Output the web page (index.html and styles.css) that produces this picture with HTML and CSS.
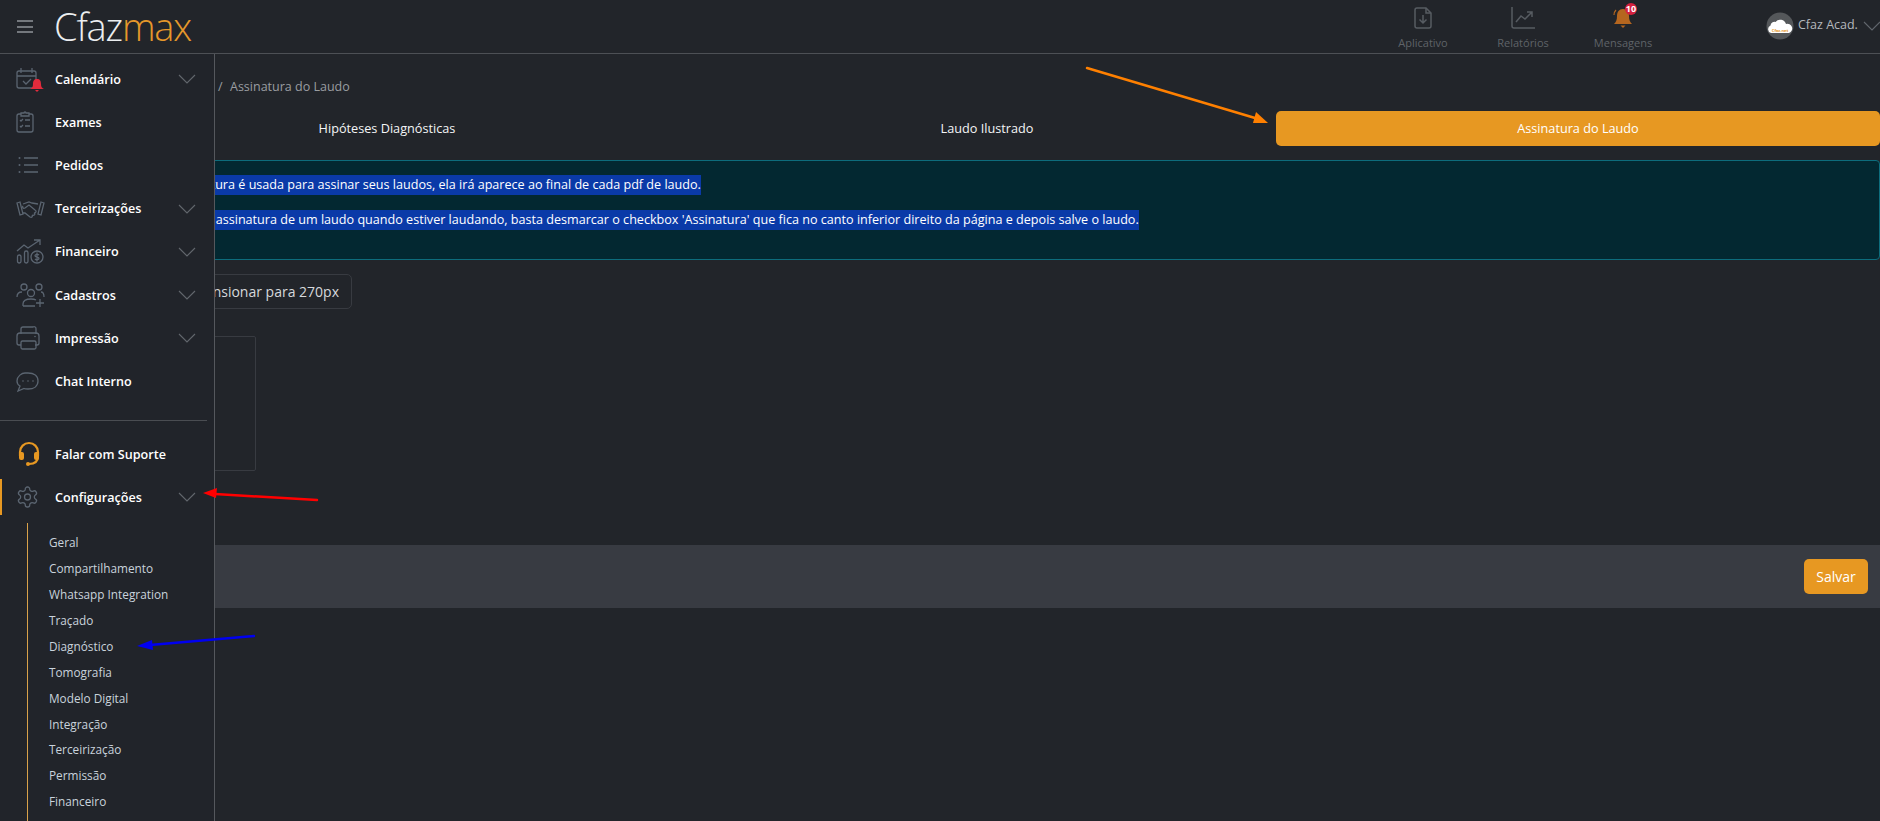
FILE: index.html
```html
<!DOCTYPE html>
<html lang="pt-BR">
<head>
<meta charset="utf-8">
<title>Assinatura do Laudo</title>
<link rel="stylesheet" href="styles.css">
</head>
<body>
<header class="topbar">
  <button class="burger" aria-label="Menu"><span></span><span></span><span></span></button>
  <div class="logo">Cfaz<span class="logo-max">max</span></div>
  <div class="actions">
    <a class="action">
      <svg class="action-icon" viewBox="0 0 24 24"><path d="M6 2h9l5 5v13a2 2 0 0 1-2 2H6a2 2 0 0 1-2-2V4a2 2 0 0 1 2-2z"/><path d="M15 2v5h5"/><path d="M12 9v8M8.500 13.500 12 17l3.500-3.500"/></svg>
      <span>Aplicativo</span>
    </a>
    <a class="action">
      <svg class="action-icon" viewBox="0 0 24 24"><path d="M1 1v19a2 2 0 0 0 2 2h21"/><path d="M5 16l5-6 4 3 7-7M16 6h5v5"/></svg>
      <span>Relatórios</span>
    </a>
    <a class="action">
      <span class="bell-wrap">
        <svg class="action-icon bell" viewBox="0 0 24 24"><path d="M12 3c4 0 6 3 6 7 0 4 1 6 3 8H3c2-2 3-4 3-8 0-4 2-7 6-7z"/><path d="M9.500 19.500h5L12 22z"/><path class="bell-arc" d="M3 9c0-2 1-4 2-5"/></svg>
        <b class="badge">10</b>
      </span>
      <span>Mensagens</span>
    </a>
  </div>
  <div class="user">
    <svg class="avatar" viewBox="0 0 28 28"><circle cx="14" cy="14" r="13.500" fill="#54575a"/><path fill="#fff" d="M5 21a4 4 0 0 1-.5-7.500 4 4 0 0 1 5-3.500 6 6 0 0 1 10.500 2 4.500 4.500 0 0 1 3 9z"/><text x="14" y="19.500" class="avatar-text">Cfaz.net</text></svg>
    <span class="user-name">Cfaz Acad.</span>
    <svg class="chev chev-user" viewBox="0 0 18 10"><path d="M1 1l8 8 8-8"/></svg>
  </div>
</header>

<div class="shell">
  <main class="main">
    <nav class="crumbs"><span class="crumb-hidden">Diagnóstico</span><span class="crumb-sep">/</span><span>Assinatura do Laudo</span></nav>
    <div class="tabs">
      <a class="tab">Hipóteses Diagnósticas</a>
      <a class="tab">Laudo Ilustrado</a>
      <a class="tab tab-active">Assinatura do Laudo</a>
    </div>
    <section class="alert">
      <p class="alert-line alert-line-first"><span class="marked">Esta assinatura é usada para assinar seus laudos, ela irá aparece ao final de cada pdf de laudo.</span></p>
      <p class="alert-line"><span class="marked">Para retirar a assinatura de um laudo quando estiver laudando, basta desmarcar o checkbox 'Assinatura' que fica no canto inferior direito da página e depois salve o laudo.</span></p>
    </section>
    <button class="resize">Redimensionar para 270px</button>
    <div class="sign-box"></div>
    <footer class="savebar"><button class="save">Salvar</button></footer>
  </main>

  <aside class="sidebar">
    <ul class="menu">
      <li class="item">
        <svg class="ico" viewBox="0 0 32 28"><rect x="3" y="6" width="19" height="17" rx="2"/><path d="M3 11h19M7 3v5M18 3v5M9 16l3 3 5-5"/><path class="red" d="M23 14c3 0 4 2 4 5 0 3 1 4 3 5H16c2-1 3-2 3-5 0-3 1-5 4-5zM21 25h4l-2 2z"/></svg>
        <span>Calendário</span>
        <svg class="chev" viewBox="0 0 18 10"><path d="M1 1l8 8 8-8"/></svg>
      </li>
      <li class="item">
        <svg class="ico" viewBox="0 0 32 28"><path d="M7 6H5a2 2 0 0 0-2 2v14a2 2 0 0 0 2 2h12a2 2 0 0 0 2-2V8a2 2 0 0 0-2-2h-2"/><path d="M7 8V5h3a1 1 0 0 1 2 0h3v3z"/><path d="M6 12l1 1 2-2M11 12h5M6 18l1 1 2-2M11 18h5"/></svg>
        <span>Exames</span>
      </li>
      <li class="item">
        <svg class="ico" viewBox="0 0 32 28"><path d="M10 6h14M10 13h14M10 20h14"/><circle class="dot" cx="5.500" cy="6" r="1"/><circle class="dot" cx="5.500" cy="13" r="1"/><circle class="dot" cx="5.500" cy="20" r="1"/></svg>
        <span>Pedidos</span>
      </li>
      <li class="item">
        <svg class="ico" viewBox="0 0 32 28"><path d="M3 8l3-1 3 12-3 1zM30 8l-3-1-3 12 3 1z"/><path d="M9 9l6-2 3 1 6 1M9 18l2 0 5 4c2 1 3-1 2-2 2 1 4-1 2-2 2 0 3-2 1-3l-6-5-4 3c-2 1-3-1-2-2"/></svg>
        <span>Terceirizações</span>
        <svg class="chev" viewBox="0 0 18 10"><path d="M1 1l8 8 8-8"/></svg>
      </li>
      <li class="item">
        <svg class="ico" viewBox="0 0 32 28"><rect x="3.500" y="17" width="3.500" height="8" rx="1.700"/><rect x="10.500" y="13" width="3.500" height="12" rx="1.700"/><path d="M3 13l7-6 4 3 12-8M20 2h6v5"/><circle cx="23" cy="19" r="6"/><path d="M25 17c-1-1-4-1-4 .8s4 .8 4 2.500-3 1.800-4 .7M23 14.500v9"/></svg>
        <span>Financeiro</span>
        <svg class="chev" viewBox="0 0 18 10"><path d="M1 1l8 8 8-8"/></svg>
      </li>
      <li class="item">
        <svg class="ico" viewBox="0 0 32 28"><circle cx="10" cy="6" r="3"/><circle cx="25" cy="6" r="3"/><circle cx="17" cy="12" r="3.500"/><path d="M3 16c0-3 2-5 5-5M30 16c0-3-1-5-3-5M9 25v-2c0-3 3-5 8-5 2 0 4 .4 5 1M9 25h12"/><path d="M26 18v8M22 22h8"/></svg>
        <span>Cadastros</span>
        <svg class="chev" viewBox="0 0 18 10"><path d="M1 1l8 8 8-8"/></svg>
      </li>
      <li class="item">
        <svg class="ico" viewBox="0 0 32 28"><path d="M7 10V5a2 2 0 0 1 2-2h10a2 2 0 0 1 3 2v5"/><path d="M7 21H5a2 2 0 0 1-2-2v-7a3 3 0 0 1 3-3h16a3 3 0 0 1 3 3v7a2 2 0 0 1-2 2h-2"/><rect x="7" y="17" width="15" height="8" rx="1.500"/><circle class="dot" cx="21" cy="12.500" r=".8"/></svg>
        <span>Impressão</span>
        <svg class="chev" viewBox="0 0 18 10"><path d="M1 1l8 8 8-8"/></svg>
      </li>
      <li class="item">
        <svg class="ico" viewBox="0 0 32 28"><path d="M14 5c6 0 10 3 10 8s-4 8-10 8c-2 0-3 0-4-.5L4 23l2-5c-2-1-3-3-3-5 0-5 5-8 8-8z"/><circle class="dot" cx="9" cy="13" r=".8"/><circle class="dot" cx="14" cy="13" r=".8"/><circle class="dot" cx="19" cy="13" r=".8"/></svg>
        <span>Chat Interno</span>
      </li>
    </ul>
    <hr class="divider">
    <ul class="menu">
      <li class="item">
        <svg class="ico ico-orange" viewBox="0 0 32 28"><path d="M6 16v-4a9 9 0 0 1 18 0v4c0 5-3 8-9 8"/><rect class="fill" x="5" y="12" width="5" height="8" rx="2"/><rect class="fill" x="20" y="12" width="5" height="8" rx="2"/><circle class="fill" cx="14" cy="24" r="2"/></svg>
        <span>Falar com Suporte</span>
      </li>
      <li class="item item-active">
        <svg class="ico" viewBox="0 0 32 28"><g transform="translate(1.500 2)"><path d="M12.220 2h-.44a2 2 0 0 0-2 2v.18a2 2 0 0 1-1 1.730l-.43.25a2 2 0 0 1-2 0l-.15-.08a2 2 0 0 0-2.730.73l-.22.38a2 2 0 0 0 .73 2.730l.15.1a2 2 0 0 1 1 1.720v.51a2 2 0 0 1-1 1.740l-.15.09a2 2 0 0 0-.73 2.730l.22.38a2 2 0 0 0 2.730.73l.15-.08a2 2 0 0 1 2 0l.43.25a2 2 0 0 1 1 1.730V20a2 2 0 0 0 2 2h.44a2 2 0 0 0 2-2v-.18a2 2 0 0 1 1-1.730l.43-.25a2 2 0 0 1 2 0l.15.08a2 2 0 0 0 2.730-.73l.22-.39a2 2 0 0 0-.73-2.730l-.15-.08a2 2 0 0 1-1-1.740v-.5a2 2 0 0 1 1-1.740l.15-.09a2 2 0 0 0 .73-2.730l-.22-.38a2 2 0 0 0-2.730-.73l-.15.08a2 2 0 0 1-2 0l-.43-.25a2 2 0 0 1-1-1.730V4a2 2 0 0 0-2-2z"/><circle cx="12" cy="12" r="3"/></g></svg>
        <span>Configurações</span>
        <svg class="chev" viewBox="0 0 18 10"><path d="M1 1l8 8 8-8"/></svg>
      </li>
    </ul>
    <ul class="submenu">
      <li>Geral</li>
      <li>Compartilhamento</li>
      <li>Whatsapp Integration</li>
      <li>Traçado</li>
      <li>Diagnóstico</li>
      <li>Tomografia</li>
      <li>Modelo Digital</li>
      <li>Integração</li>
      <li>Terceirização</li>
      <li>Permissão</li>
      <li>Financeiro</li>
    </ul>
  </aside>
</div>

<svg class="arrows" viewBox="0 0 1880 821" aria-hidden="true">
  <path class="arrow-line orange" d="M1087 68 1255 118"/>
  <path class="arrow-head orange-fill" d="M1268 123 1253 123 1256 112z"/>
  <path class="arrow-line red-line" d="M317 500 215 494"/>
  <path class="arrow-head red-fill" d="M203 493 217 488 216 498z"/>
  <path class="arrow-line blue" d="M254 636 150 645"/>
  <path class="arrow-head blue-fill" d="M137 646 152 640 153 650z"/>
</svg>
</body>
</html>
```

FILE: styles.css
```css
* { box-sizing: border-box; }
html, body { margin: 0; height: 821px; overflow: hidden; }
body {
  background: #22252a;
  color: #fff;
  font-family: "Open Sans", "Liberation Sans", sans-serif;
  font-size: 13px;
  display: flex;
  flex-direction: column;
  position: relative;
}
ul { list-style: none; margin: 0; padding: 0; }
p { margin: 0; }

.topbar {
  height: 54px;
  flex: none;
  display: flex;
  align-items: center;
  border-bottom: 1px solid #4d5055;
}
.burger {
  width: 16px;
  height: 13px;
  margin-left: 17px;
  padding: 0;
  border: 0;
  background: none;
  display: flex;
  flex-direction: column;
  justify-content: space-between;
}
.burger span { display: block; height: 2px; width: 16px; background: #74787d; }
.logo {
  margin-left: 21px;
  font-family: "Open Sans", sans-serif;
  font-weight: 300;
  font-size: 38px;
  letter-spacing: -1.200px;
  line-height: 52px;
  height: 53px;
  color: #eceef0;
}
.logo-max { color: #e5982a; }
.actions { margin-left: auto; display: flex; align-items: flex-start; height: 53px; margin-right: 93px; }
.action {
  width: 100px;
  display: flex;
  flex-direction: column;
  align-items: center;
  padding-top: 6px;
  font-size: 11px;
  line-height: 15px;
  color: #5f6368;
}
.action-icon {
  width: 24px;
  height: 24px;
  fill: none;
  stroke: #575c62;
  stroke-width: 1.5;
  display: block;
  margin-bottom: 5px;
}
.bell-wrap { position: relative; display: block; height: 29px; }
.bell { fill: #b5661f; stroke: none; }
.bell .bell-arc { fill: none; stroke: #b5661f; stroke-width: 1.200; }
.badge {
  position: absolute;
  top: -3px;
  left: 14px;
  width: 12px;
  height: 12px;
  border-radius: 50%;
  background: #d5213f;
  color: #fff;
  font-size: 9px;
  line-height: 12px;
  text-align: center;
  font-weight: 700;
}
.user { display: flex; align-items: center; width: 114px; height: 53px; padding-bottom: 2px; }
.avatar { width: 28px; height: 28px; flex: none; }
.avatar-text { font-size: 4px; fill: #e5982a; text-anchor: middle; font-weight: 700; font-family: "Open Sans", sans-serif; }
.user-name { margin-left: 4px; margin-top: -2px; font-size: 12.500px; color: #b4b8bc; white-space: nowrap; }
.chev { width: 18px; height: 10px; margin-left: auto; fill: none; stroke: #62676d; stroke-width: 1.100; flex: none; }
.chev-user { margin-left: 5px; }

.shell { position: relative; flex: 1; min-height: 0; }
.main { margin-left: 76px; padding-top: 23px; }
.crumbs { height: 20px; line-height: 20px; font-size: 12.500px; color: #9a9da1; padding-left: 70px; display: flex; }
.crumb-hidden { width: 72px; }
.crumb-sep { width: 12px; }
.tabs { margin-top: 14px; display: grid; grid-template-columns: 622px 578px 1fr; height: 35px; }
.tab { display: flex; align-items: center; justify-content: center; padding-bottom: 2px; border-radius: 5px; font-size: 12.700px; color: #f4f5f6; }
.tab-active { background: #e79822; color: #fff; }
.alert {
  margin-top: 14px;
  height: 100px;
  padding: 14px 0 0 58px;
  background: #032831;
  border: 1px solid #0d6c7c;
  border-radius: 4px;
}
.alert-line { line-height: 20px; height: 20px; margin-bottom: 15px; font-size: 12.600px; white-space: nowrap; }
.alert-line-first { padding-left: 11px; }
.marked { display: inline-block; background: #0a3aa8; color: #fff; line-height: 20px; }
.resize {
  display: block;
  margin-top: 14px;
  margin-left: 30px;
  width: 246px;
  height: 35px;
  padding: 0 12px 0 0;
  text-align: right;
  background: none;
  border: 1px solid #383b41;
  border-radius: 5px;
  color: #d6d9dc;
  font: 14px "Open Sans", sans-serif;
}
.sign-box { margin-top: 27px; width: 180px; height: 135px; border: 1px solid #383b41; border-radius: 2px; }
.savebar {
  margin-top: 74px;
  height: 63px;
  background: #383b42;
  display: flex;
  justify-content: flex-end;
  align-items: center;
  padding-right: 12px;
}
.save {
  width: 64px;
  height: 35px;
  padding: 0;
  border: 0;
  border-radius: 5px;
  background: #e79822;
  color: #fff;
  font: 14px "Open Sans", sans-serif;
}

.sidebar {
  position: absolute;
  left: 0;
  top: 0;
  bottom: 0;
  width: 215px;
  background: #21242a;
  border-right: 1px solid #55585d;
  padding-top: 3.600px;
  display: flex;
  flex-direction: column;
  overflow: hidden;
}
.item {
  height: 43.200px;
  display: flex;
  align-items: center;
  padding: 0 18px 0 14px;
  font-weight: 600;
  font-size: 12.600px;
  color: #fff;
  position: relative;
}
.ico { width: 32px; height: 28px; flex: none; margin-right: 9px; fill: none; stroke: #5b6571; stroke-width: 1.300; overflow: visible; }
.ico .red { fill: #e22b3c; stroke: none; }
.ico .dot { fill: #5b6571; stroke: none; }
.ico-orange { stroke: #e79822; stroke-width: 2.200; }
.ico-orange .fill { fill: #e79822; stroke: none; }
.divider { width: 207px; margin: 17.400px 0 11px; border: 0; border-top: 1px solid #4a4d52; flex: none; }
.item-active::before {
  content: "";
  position: absolute;
  left: 0;
  top: 3px;
  bottom: 4px;
  width: 2px;
  background: #e79822;
}
.submenu {
  flex: 1;
  margin: 4px 0 0 27px;
  padding: 7.500px 0 0 21px;
  border-left: 1px solid #d9a24a;
  font-size: 11.800px;
  color: #c9d3dc;
}
.submenu li { height: 25.900px; line-height: 25.900px; white-space: nowrap; }

.arrows { position: absolute; left: 0; top: 0; width: 1880px; height: 821px; pointer-events: none; }
.arrow-line { fill: none; stroke-width: 2.500; stroke-linecap: round; }
.orange { stroke: #ff8000; }
.orange-fill { fill: #ff8000; }
.red-line { stroke: #f00; }
.red-fill { fill: #f00; }
.blue { stroke: #0000f0; }
.blue-fill { fill: #0000f0; }
```
